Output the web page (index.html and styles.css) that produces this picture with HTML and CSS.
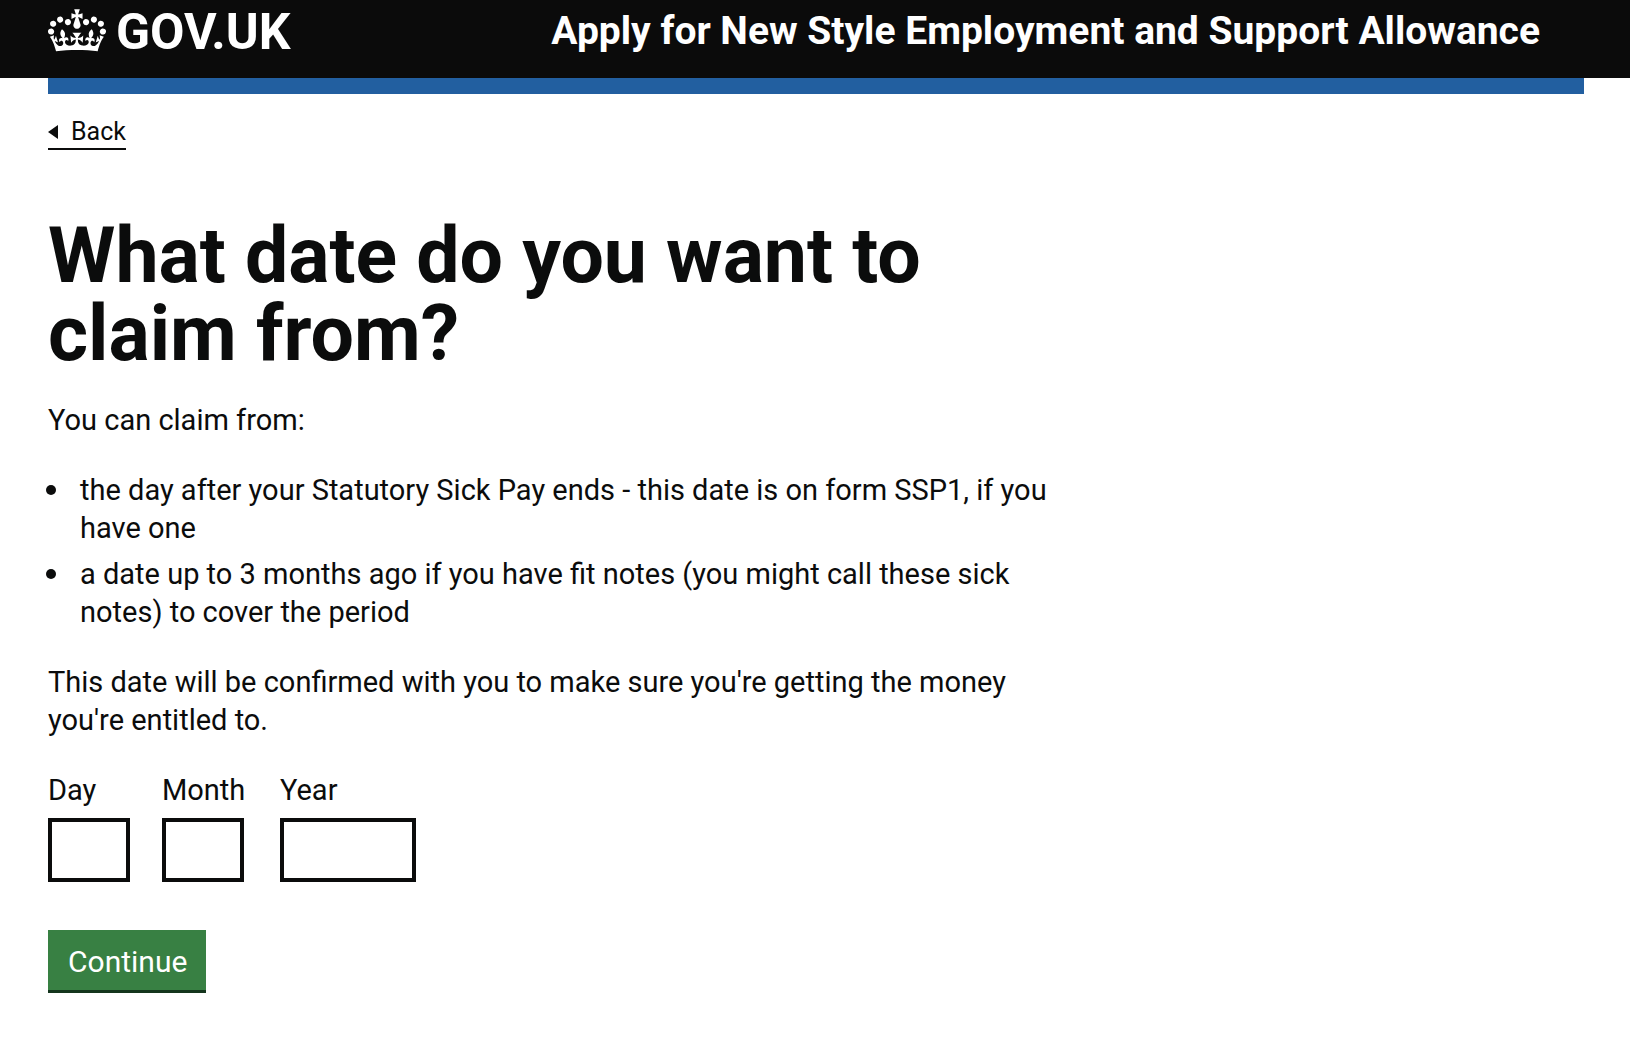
FILE: index.html
```html
<!DOCTYPE html>
<html lang="en">
<head>
<meta charset="utf-8">
<meta name="viewport" content="width=device-width, initial-scale=1">
<title>What date do you want to claim from?</title>
<link rel="stylesheet" href="styles.css">
</head>
<body>
<header class="header">
  <div class="header-inner">
    <a class="logo" href="#">
      <svg class="crown" viewBox="0 0 132 97" aria-hidden="true"><path fill="currentColor" fill-rule="evenodd" d="M25 30.2c3.5 1.5 7.7-.2 9.1-3.7 1.5-3.6-.2-7.8-3.9-9.2-3.6-1.4-7.6.3-9.1 3.9-1.4 3.5.3 7.5 3.9 9zM9 39.5c3.6 1.5 7.8-.2 9.2-3.7 1.5-3.6-.2-7.8-3.9-9.1-3.6-1.5-7.6.2-9.1 3.8-1.4 3.5.3 7.5 3.8 9zM4.4 57.2c3.5 1.5 7.7-.2 9.1-3.8 1.5-3.6-.2-7.7-3.9-9.1-3.5-1.5-7.6.3-9.1 3.8-1.4 3.5.3 7.6 3.9 9.1zm38.3-21.4c3.5 1.5 7.7-.2 9.1-3.8 1.5-3.6-.2-7.7-3.9-9.1-3.6-1.5-7.6.3-9.1 3.8-1.3 3.6.4 7.7 3.9 9.1zm64.4-5.6c-3.6 1.5-7.8-.2-9.1-3.7-1.5-3.6.2-7.8 3.8-9.2 3.6-1.4 7.7.3 9.2 3.9 1.3 3.5-.4 7.5-3.9 9zm15.9 9.3c-3.6 1.5-7.7-.2-9.1-3.7-1.5-3.6.2-7.8 3.7-9.1 3.6-1.5 7.7.2 9.2 3.8 1.5 3.5-.3 7.5-3.8 9zm4.7 17.7c-3.6 1.5-7.8-.2-9.2-3.8-1.5-3.6.2-7.7 3.9-9.1 3.6-1.5 7.7.3 9.2 3.8 1.3 3.5-.4 7.6-3.9 9.1zM89.3 35.8c-3.6 1.5-7.8-.2-9.2-3.8-1.4-3.6.2-7.7 3.9-9.1 3.6-1.5 7.7.3 9.2 3.8 1.4 3.6-.3 7.7-3.9 9.1zM69.7 17.7l8.9 4.7V9.3l-8.9 2.8c-.2-.3-.5-.6-.9-.9L72.4 0H59.6l3.5 11.2c-.3.3-.6.5-.9.9l-8.8-2.8v13.1l8.8-4.7c.3.3.6.7.9.9l-5 15.4v.1c-.2.8-.4 1.6-.4 2.4 0 4.1 3.1 7.5 7 8.1h.2c.3 0 .7.1 1 .1.4 0 .7 0 1-.1h.2c4-.6 7.1-4.1 7.1-8.1 0-.8-.1-1.7-.4-2.4V34l-5.1-15.4c.4-.2.7-.6 1-.9zM66 92.8c16.9 0 32.8 1.1 47.1 3.2 4-16.9 8.9-26.7 14-33.5l-9.6-3.4c1 4.9 1.1 7.2 0 10.2-1.5-1.4-3-4.3-4.2-8.7L108.6 76c2.8-2 5-3.2 7.5-3.3-4.4 9.4-10 11.9-13.6 11.2-4.3-.8-6.3-4.6-5.6-7.9 1-4.7 5.7-5.9 8-.5 4.3-8.7-3-11.4-7.6-8.8 7.1-7.2 7.9-13.5 2.1-21.1-8 6.1-8.1 12.3-4.5 20.8-4.7-5.4-12.1-2.5-9.5 6.2 3.4-5.2 7.9-2 7.2 3.1-.6 4.3-6.4 7.8-13.5 7.2-10.3-.9-10.9-8-11.2-13.8 2.5-.5 7.1 1.8 11 7.3L80.2 60c-4.1 4.4-8 5.3-12.3 5.4 1.4-4.4 8-11.6 8-11.6H55.5s6.4 7.2 7.9 11.6c-4.2-.1-8-1-12.3-5.4l1.4 16.4c3.9-5.5 8.5-7.7 10.9-7.3-.3 5.8-.9 12.8-11.1 13.8-7.2.6-12.9-2.9-13.5-7.2-.7-5 3.8-8.3 7.1-3.1 2.7-8.7-4.6-11.6-9.4-6.2 3.7-8.5 3.6-14.7-4.6-20.8-5.8 7.6-5 13.9 2.2 21.1-4.7-2.6-11.9.1-7.7 8.8 2.3-5.5 7.1-4.2 8.1.5.7 3.3-1.3 7.1-5.7 7.9-3.5.7-9-1.8-13.5-11.2 2.5.1 4.7 1.3 7.5 3.3l-4.7-15.4c-1.2 4.4-2.7 7.2-4.3 8.7-1.1-3-.9-5.3 0-10.2l-9.5 3.4c5 6.9 9.9 16.7 14 33.5 14.8-2.1 30.8-3.2 47.7-3.2z"/></svg>
      <span>GOV.UK</span>
    </a>
    <a class="service" href="#">Apply for New Style Employment and Support Allowance</a>
  </div>
</header>
<div class="container">
  <div class="bar"></div>
  <a class="back" href="#"><svg class="arrow" viewBox="0 0 10 14" aria-hidden="true"><path fill="currentColor" d="M0 7 10 0v14z"/></svg>Back</a>
  <main class="main">
    <h1 class="title">What date do you want to claim from?</h1>
    <p class="text">You can claim from:</p>
    <ul class="list">
      <li>the day after your Statutory Sick Pay ends - this date is on form SSP1, if you have one</li>
      <li>a date up to 3 months ago if you have fit notes (you might call these sick notes) to cover the period</li>
    </ul>
    <p class="text">This date will be confirmed with you to make sure you're getting the money you're entitled to.</p>
    <form class="form">
      <div class="dates">
        <div class="field"><label for="day">Day</label><input class="input" id="day" type="text" inputmode="numeric"></div>
        <div class="field field-month"><label for="month">Month</label><input class="input" id="month" type="text" inputmode="numeric"></div>
        <div class="field"><label for="year">Year</label><input class="input input-year" id="year" type="text" inputmode="numeric"></div>
      </div>
      <button class="button" type="button">Continue</button>
    </form>
  </main>
</div>
</body>
</html>
```
FILE: styles.css
```css
* { box-sizing: border-box; }
body {
  margin: 0;
  background: #fff;
  color: #0b0c0c;
  font: 29px/38px Roboto, "Liberation Sans", sans-serif;
}
.header { background: #0b0b0b; color: #fff; }
.header-inner {
  display: flex;
  justify-content: space-between;
  margin: 0 46px 0 48px;
  padding: 0 44px 14px 0;
}
.logo {
  display: flex;
  align-items: center;
  gap: 10px;
  height: 64px;
  color: inherit;
  font-size: 50px;
  font-weight: 700;
  text-decoration: none;
}
.crown { width: 58px; height: 43px; margin-bottom: 4px; }
.service {
  color: inherit;
  font-size: 39px;
  font-weight: 700;
  line-height: 62px;
  text-decoration: none;
}
.container { margin: 0 46px 0 48px; }
.bar { height: 16px; background: #225fa0; }
.back {
  display: inline-flex;
  align-items: center;
  gap: 13px;
  margin-top: 22px;
  border-bottom: 2px solid #0b0c0c;
  color: inherit;
  font-size: 25px;
  line-height: 32px;
  text-decoration: none;
}
.arrow { width: 10px; height: 14px; }
.main { max-width: 1024px; padding: 67px 0 52px; }
.title {
  max-width: 940px;
  margin: 0 0 28px;
  font-size: 77px;
  font-weight: 700;
  line-height: 78px;
}
.text { margin: 0 0 32px; }
.list { margin: 0 0 32px -2px; padding: 0; list-style: none; }
.list li { display: flex; gap: 24px; }
.list li::before {
  content: "";
  flex: none;
  width: 10px;
  height: 10px;
  margin-top: 14px;
  border-radius: 50%;
  background: #0b0c0c;
}
.list li + li { margin-top: 8px; }
.dates { display: flex; gap: 32px; margin-bottom: 48px; }
.field { display: flex; flex-direction: column; align-items: flex-start; gap: 9px; }
.field-month { min-width: 86px; }
.input {
  width: 82px;
  height: 64px;
  padding: 8px;
  border: 4px solid #0b0c0c;
  border-radius: 0;
  background: #fff;
  font: inherit;
}
.input-year { width: 136px; }
.button {
  height: 60px;
  padding: 4px 19px 0 20px;
  border: 0;
  background: #388043;
  box-shadow: 0 3px 0 #14351d;
  color: #fff;
  font: inherit;
  font-size: 30px;
}
```
